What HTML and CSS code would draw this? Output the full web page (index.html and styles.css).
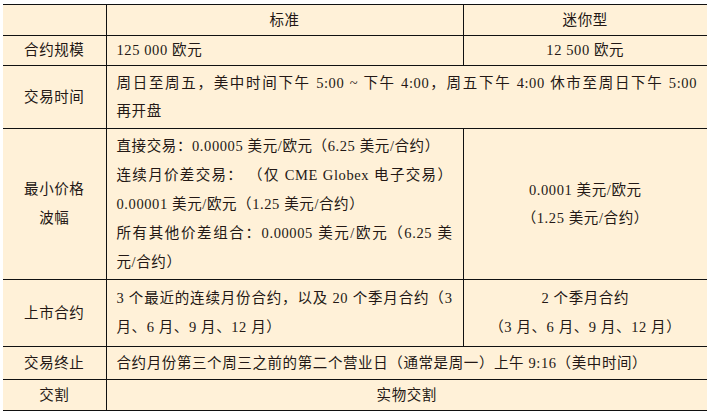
FILE: index.html
```html
<!DOCTYPE html>
<html lang="zh-CN">
<head>
<meta charset="utf-8">
<title>欧元期货合约规格</title>
<link rel="stylesheet" href="styles.css">
</head>
<body>
<div class="wrap">
<table class="spec">
  <colgroup>
    <col class="c1">
    <col class="c2">
    <col class="c3">
  </colgroup>
  <tr class="r-head">
    <th></th>
    <th class="ctr">标准</th>
    <th class="ctr">迷你型</th>
  </tr>
  <tr class="r-size">
    <td class="lab">合约规模</td>
    <td>125 000 欧元</td>
    <td class="ctr">12 500 欧元</td>
  </tr>
  <tr class="r-time">
    <td class="lab">交易时间</td>
    <td colspan="2">
      <div class="jl">周日至周五，美中时间下午 5:00 ~ 下午 4:00，周五下午 4:00 休市至周日下午 5:00</div>
      <div>再开盘</div>
    </td>
  </tr>
  <tr class="r-tick">
    <td class="lab">最小价格<br>波幅</td>
    <td>
      <div>直接交易：0.00005 美元/欧元（6.25 美元/合约）</div>
      <div class="jl">连续月价差交易： （仅 CME Globex 电子交易）</div>
      <div>0.00001 美元/欧元（1.25 美元/合约）</div>
      <div class="jl">所有其他价差组合：0.00005 美元/欧元（6.25 美</div>
      <div>元/合约）</div>
    </td>
    <td class="ctr tight">
      <div>0.0001 美元/欧元</div>
      <div>（1.25 美元/合约）</div>
    </td>
  </tr>
  <tr class="r-list">
    <td class="lab">上市合约</td>
    <td>
      <div class="jl">3 个最近的连续月份合约，以及 20 个季月合约（3</div>
      <div>月、6 月、9 月、12 月）</div>
    </td>
    <td class="ctr">
      <div>2 个季月合约</div>
      <div>（3 月、6 月、9 月、12 月）</div>
    </td>
  </tr>
  <tr class="r-end">
    <td class="lab">交易终止</td>
    <td colspan="2">合约月份第三个周三之前的第二个营业日（通常是周一）上午 9:16（美中时间）</td>
  </tr>
  <tr class="r-deliv">
    <td class="lab">交割</td>
    <td colspan="2" class="ctr">实物交割</td>
  </tr>
</table>
</div>
</body>
</html>
```

FILE: styles.css
```css
html, body {
  margin: 0;
  padding: 0;
  background: #ffffff;
}

.wrap {
  padding: 4px 3px 0 3px;
}

.spec {
  width: 704px;
  table-layout: fixed;
  border-collapse: collapse;
  background: #fff1d8;
  color: #231815;
  font-family: "Liberation Serif", "Noto Sans CJK SC", serif;
  font-size: 14.5px;
  line-height: 29px;
  letter-spacing: 0.6px;
}

.c1 { width: 103px; }
.c2 { width: 357px; }
.c3 { width: 244px; }

.spec th,
.spec td {
  border-top: 1px solid #111;
  border-bottom: 1px solid #111;
  border-left: 1px solid #111;
  padding: 0 10px;
  vertical-align: middle;
  text-align: left;
  font-weight: normal;
  white-space: nowrap;
}

.spec th:first-child,
.spec td:first-child {
  border-left: none;
}

.spec .lab,
.spec .ctr {
  text-align: center;
}

.spec .tight {
  line-height: 28px;
}

.jl {
  text-align: justify;
  text-align-last: justify;
}

.r-head { height: 31px; }
.r-size { height: 29px; }
.r-time { height: 63px; line-height: 28px; }
.r-tick { height: 151px; }
.r-list { height: 67px; }
.r-end { height: 33px; }
.r-deliv { height: 31px; }
```
